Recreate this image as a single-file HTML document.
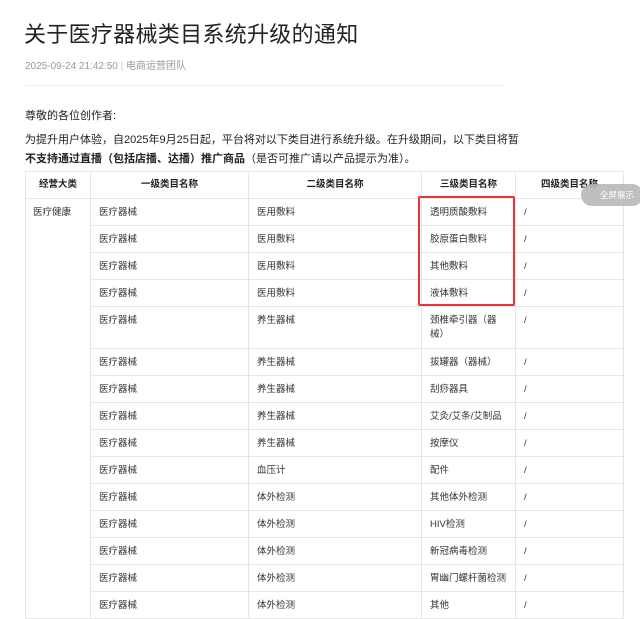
<!DOCTYPE html>
<html><head><meta charset="utf-8"><style>
*{margin:0;padding:0;box-sizing:border-box}
body{width:640px;height:596px;overflow:hidden;background:#fff;font-family:"Liberation Sans","Noto Sans CJK SC",sans-serif;color:#222;position:relative}
.t{position:absolute;left:24px;top:17px;font-size:22px;color:#222;letter-spacing:0.3px}
.m{position:absolute;left:25px;top:57px;font-size:10px;color:#999}
.hr{position:absolute;left:25px;top:85px;width:480px;border-top:1px solid #eee}
.p{position:absolute;left:25px;font-size:11px;color:#222}
table{position:absolute;left:25px;top:171px;border-collapse:collapse;font-size:9.5px;color:#333}
td,th{border:1px solid #e6e6e6;padding:0 8px;vertical-align:top;text-align:left;font-weight:normal;line-height:14px}
th{text-align:center;font-weight:bold;height:27px;vertical-align:middle;color:#222}
td{height:27px;padding-top:7px}
.red{position:absolute;left:418px;top:196px;width:97px;height:110px;border:2px solid #e8333a;border-radius:2px}
.btn{position:absolute;left:581px;top:184px;width:62px;height:22px;border-radius:11px;background:#b5b5b5;color:#fff;font-size:8.5px;line-height:22px;padding-left:19px;opacity:.85}
</style></head><body>
<div class="t">关于医疗器械类目系统升级的通知</div>
<div class="m">2025-09-24 21:42:50 <span style="color:#ccc">|</span> 电商运营团队</div>
<div class="hr"></div>
<div class="p" style="top:107px">尊敬的各位创作者:</div>
<div class="p" style="top:131px">为提升用户体验，自2025年9月25日起，平台将对以下类目进行系统升级。在升级期间，以下类目将暂</div>
<div class="p" style="top:150px"><b>不支持通过直播（包括店播、达播）推广商品</b>（是否可推广请以产品提示为准）。</div>
<table>
<tr><th style="width:65px">经营大类</th><th style="width:158px">一级类目名称</th><th style="width:173px">二级类目名称</th><th style="width:94px">三级类目名称</th><th style="width:108px">四级类目名称</th></tr>
<tr><td rowspan="15" style="padding-left:7px">医疗健康</td><td>医疗器械</td><td>医用敷料</td><td>透明质酸敷料</td><td>/</td></tr>
<tr><td>医疗器械</td><td>医用敷料</td><td>胶原蛋白敷料</td><td>/</td></tr>
<tr><td>医疗器械</td><td>医用敷料</td><td>其他敷料</td><td>/</td></tr>
<tr><td>医疗器械</td><td>医用敷料</td><td>液体敷料</td><td>/</td></tr>
<tr><td style="height:42px">医疗器械</td><td>养生器械</td><td>颈椎牵引器（器械）</td><td>/</td></tr>
<tr><td>医疗器械</td><td>养生器械</td><td>拔罐器（器械）</td><td>/</td></tr>
<tr><td>医疗器械</td><td>养生器械</td><td>刮痧器具</td><td>/</td></tr>
<tr><td>医疗器械</td><td>养生器械</td><td>艾灸/艾条/艾制品</td><td>/</td></tr>
<tr><td>医疗器械</td><td>养生器械</td><td>按摩仪</td><td>/</td></tr>
<tr><td>医疗器械</td><td>血压计</td><td>配件</td><td>/</td></tr>
<tr><td>医疗器械</td><td>体外检测</td><td>其他体外检测</td><td>/</td></tr>
<tr><td>医疗器械</td><td>体外检测</td><td>HIV检测</td><td>/</td></tr>
<tr><td>医疗器械</td><td>体外检测</td><td>新冠病毒检测</td><td>/</td></tr>
<tr><td>医疗器械</td><td>体外检测</td><td>胃幽门螺杆菌检测</td><td>/</td></tr>
<tr><td>医疗器械</td><td>体外检测</td><td>其他</td><td>/</td></tr>
</table>
<div class="red"></div>
<div class="btn">全屏展示</div>
</body></html>
